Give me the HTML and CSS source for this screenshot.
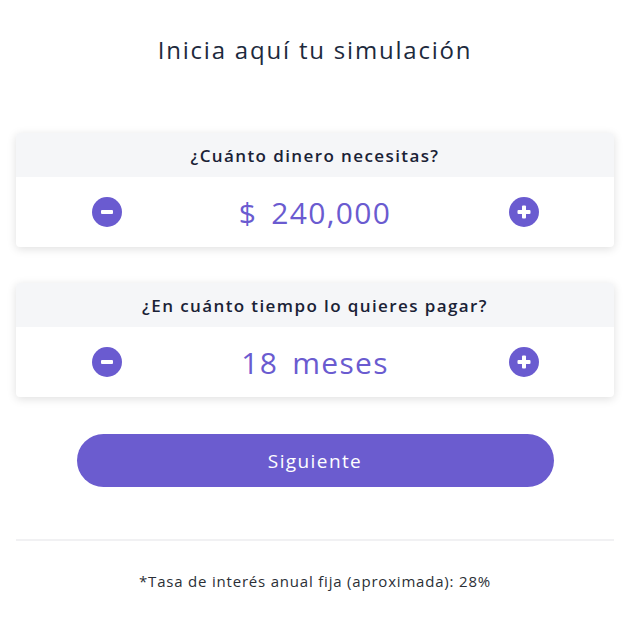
FILE: index.html
```html
<!DOCTYPE html>
<html lang="es">
<head>
<meta charset="utf-8">
<link rel="stylesheet" href="styles.css">
</head>
<body>
<main class="page">
  <h1 class="title">Inicia aquí tu simulación</h1>

  <section class="card card-amount">
    <div class="card-head">¿Cuánto dinero necesitas?</div>
    <div class="card-body">
      <button class="round-btn" aria-label="menos">
        <svg viewBox="0 0 30 30" width="30" height="30"><circle cx="15" cy="15" r="15" fill="#6a5bd0"/><rect x="9" y="13" width="12" height="4" rx="1" fill="#fff"/></svg>
      </button>
      <div class="value"><span class="cur">$</span><span>240,000</span></div>
      <button class="round-btn" aria-label="más">
        <svg viewBox="0 0 30 30" width="30" height="30"><circle cx="15" cy="15" r="15" fill="#6a5bd0"/><rect x="8.5" y="13" width="13" height="4" rx="1" fill="#fff"/><rect x="13" y="8.5" width="4" height="13" rx="1" fill="#fff"/></svg>
      </button>
    </div>
  </section>

  <section class="card card-term">
    <div class="card-head">¿En cuánto tiempo lo quieres pagar?</div>
    <div class="card-body">
      <button class="round-btn" aria-label="menos">
        <svg viewBox="0 0 30 30" width="30" height="30"><circle cx="15" cy="15" r="15" fill="#6a5bd0"/><rect x="9" y="13" width="12" height="4" rx="1" fill="#fff"/></svg>
      </button>
      <div class="value"><span class="cur">18</span><span>meses</span></div>
      <button class="round-btn" aria-label="más">
        <svg viewBox="0 0 30 30" width="30" height="30"><circle cx="15" cy="15" r="15" fill="#6a5bd0"/><rect x="8.5" y="13" width="13" height="4" rx="1" fill="#fff"/><rect x="13" y="8.5" width="4" height="13" rx="1" fill="#fff"/></svg>
      </button>
    </div>
  </section>

  <div class="cta-wrap"><button class="cta">Siguiente</button></div>

  <hr class="divider">

  <p class="note">*Tasa de interés anual fija (aproximada): 28%</p>
</main>
</body>
</html>
```

FILE: styles.css
```css
* { box-sizing: border-box; }
html, body { margin: 0; padding: 0; background: #fff; }
body {
  font-family: "Open Sans", "DejaVu Sans", sans-serif;
  color: #1f2937;
}
.page {
  width: 630px;
  padding: 32px 16px 0 16px;
  display: flex;
  flex-direction: column;
}
.title {
  margin: 0;
  text-align: center;
  font-weight: 400;
  font-size: 24px;
  line-height: 36px;
  color: #1d2a3d;
  letter-spacing: 1.8px;
}
.card {
  background: #fff;
  border-radius: 4px;
  box-shadow: 0 2px 10px rgba(0,0,0,0.13);
  overflow: hidden;
}
.card-amount { margin-top: 65px; }
.card-term { margin-top: 36px; }
.card-head {
  height: 44px;
  background: #f5f6f8;
  display: flex;
  align-items: center;
  justify-content: center;
  font-weight: 600;
  font-size: 17px;
  letter-spacing: 1.4px;
  color: #1a2236;
}
.card-body {
  height: 70px;
  display: grid;
  grid-template-columns: 1fr auto 1fr;
  align-items: center;
}
.round-btn {
  border: 0;
  padding: 0;
  background: none;
  width: 30px;
  height: 30px;
  display: block;
}
.round-btn svg { display: block; }
.card-body .round-btn:first-child { justify-self: start; margin-left: 76px; }
.card-body .round-btn:last-child { justify-self: end; margin-right: 75px; }
.value {
  display: flex;
  gap: 14px;
  font-size: 30px;
  color: #6a5bd0;
  letter-spacing: 1.3px;
}
.cta-wrap {
  margin-top: 37px;
  display: flex;
  justify-content: center;
}
.cta {
  width: 477px;
  height: 53px;
  border: 0;
  border-radius: 27px;
  background: #6b5ccf;
  color: #fff;
  font-family: inherit;
  font-size: 19px;
  letter-spacing: 1.4px;
}
.divider {
  margin: 52px 0 0 0;
  border: 0;
  height: 2px;
  background: #f1f1f3;
}
.note {
  margin: 30px 0 0 0;
  text-align: center;
  font-size: 15px;
  letter-spacing: 0.8px;
  color: #2b2f36;
}
```
